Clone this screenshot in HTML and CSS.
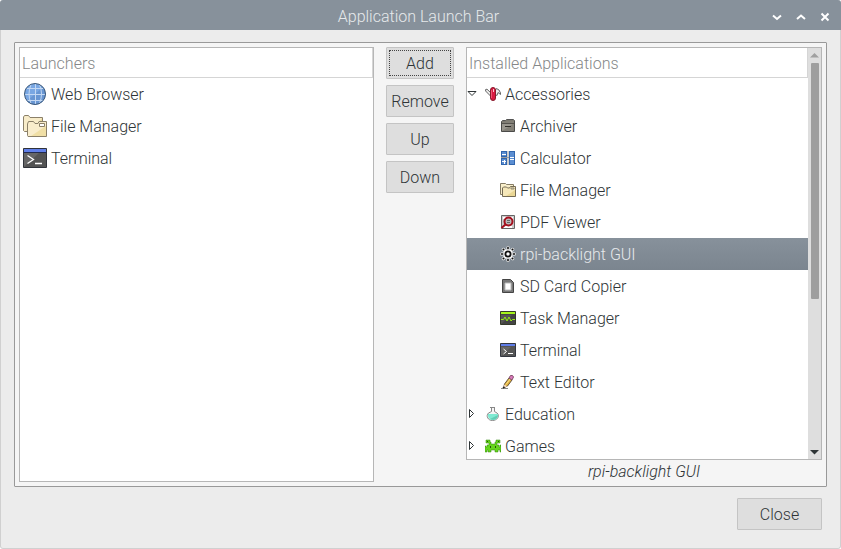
FILE: index.html
```html
<!DOCTYPE html>
<html lang="en">
<head>
<meta charset="utf-8">
<title>Application Launch Bar</title>
<link rel="stylesheet" href="styles.css">
</head>
<body>
<main class="window">
  <header class="titlebar">
    <h1 class="title">Application Launch Bar</h1>
    <div class="controls">
      <button class="control" aria-label="Minimize"><svg viewBox="0 0 12 12"><path d="M2 4.500 6 8l4-3.500"/></svg></button>
      <button class="control" aria-label="Maximize"><svg viewBox="0 0 12 12"><path d="M2 8l4-3.500L10 8"/></svg></button>
      <button class="control" aria-label="Close window"><svg viewBox="0 0 12 12"><path d="M2.500 2.500l7 7M9.500 2.500l-7 7"/></svg></button>
    </div>
  </header>
  <div class="content">
    <section class="frame">
      <div class="list">
        <div class="pane">
          <h2 class="heading">Launchers</h2>
          <ul class="rows launchers">
            <li class="row"><svg class="big" viewBox="0 0 24 24"><circle cx="12" cy="12" r="10.500" fill="#79a7e3"/><path d="M4 19 20 5a10.500 10.500 0 0 1-16 14z" fill="#6896d3"/><path d="M2 6.500h20M1.500 12.500h21M3 18.500h18M12.500 2v20M8 2.500q-4 9.500 0 19M16.500 2.500q4 9.500 0 19" fill="none" stroke="#c3d8f3"/><circle cx="12" cy="12" r="10.500" fill="none" stroke="#3c5878"/></svg>Web Browser</li>
            <li class="row"><svg class="big" viewBox="0 0 24 24"><path d="M1.500 17.500l-1-1V3l1-1.500h4L7 3.500h12.500v14z" fill="#f8ecc9" stroke="#8b8069"/><path d="M19 4v13H9z" fill="#eddc9f"/><path d="M5 22.500l-.5-1V10l1-2.500h5l1.500 2h3l1-2h7.500v15z" fill="#f9edcc" stroke="#8b8069"/><path d="M23 12v10H8z" fill="#f0dfa6"/><path d="M16.500 9.500h5v3h-5z" fill="#fff" stroke="#8b8069"/></svg>File Manager</li>
            <li class="row"><svg class="big" viewBox="0 0 24 24"><path d="M.5 2.500h23v19H.5z" fill="#535353" stroke="#30333a"/><path d="M1 21V6h16z" fill="#666"/><path d="M1 3h22v3H1z" fill="#607fe8"/><path d="M0 6.500h24" stroke="#222b4f"/><path d="M4.500 9.500l6 4-6 4M12 17.500h7" fill="none" stroke="#fff" stroke-width="1.300"/></svg>Terminal</li>
          </ul>
        </div>
      </div>
      <div class="actions">
        <button class="button focused">Add</button>
        <button class="button">Remove</button>
        <button class="button">Up</button>
        <button class="button">Down</button>
      </div>
      <div class="installed">
        <div class="list">
          <div class="pane">
            <h2 class="heading">Installed Applications</h2>
            <ul class="rows tree">
              <li class="row group"><svg class="arrow" viewBox="0 0 10 10"><path d="M1 2.500h8L5 6.500z"/></svg><svg class="icon" viewBox="0 0 16 16"><path d="M5.500 10 .6 5V3.500l1.400-.3L6 7M10 5l1.500-2.500L14 4l1.500 3v1.500L13 6.500l-1 3-2-1" fill="#eee" stroke="#666"/><rect x="5.500" y="1.500" width="5" height="13" rx="2.500" fill="#d91941" stroke="#861a2b"/><path d="M6 4v8h1V4z" fill="#ef5572"/><path d="M8 3h1v3H8z" fill="#f9c4cd"/></svg>Accessories</li>
              <li class="row item"><svg class="icon" viewBox="0 0 16 16"><path d="M1.500 13.500v-10l1-.9h3l1-1h7l1 1v10.900z" fill="#827f76" stroke="#4b4b49"/><path d="M2 5.500h12" stroke="#55534e"/><path d="M2 13V6h11z" fill="#99968e"/><path d="M5 8.500h6" stroke="#302e29"/></svg>Archiver</li>
              <li class="row item"><svg class="icon" viewBox="0 0 16 16"><path d="M1 1h6v6H1zM1 8h6v7H1zM9 1h6v14H9z" fill="#3266ad"/><path d="M2 2h4v4H2zM2 9h4v5H2zM10 2h4v12h-4z" fill="#5b8ed2"/><path d="M1 7.500h8M8 1v14" stroke="#9a9c9e"/><path d="M2 4.500h4M2 11.500h4M4.500 10v4M10 7.500h4M10 9.500h4" stroke="#fff"/></svg>Calculator</li>
              <li class="row item"><svg class="icon" viewBox="0 0 16 16"><path d="M.5 12.500v-11h5l1 1h7v10z" fill="#f9efcb" stroke="#857c65"/><path d="M2.500 14.500V6l1-1h3l1 1h2l1-1.500h5v10z" fill="#f6e8b9" stroke="#746b55"/><path d="M15 8v6H6z" fill="#ead795"/><path d="M11 6h3v1h-3z" fill="#fff" stroke="#91886d"/></svg>File Manager</li>
              <li class="row item"><svg class="icon" viewBox="0 0 16 16"><path d="M1.500 1.500h13v13h-13z" fill="#ccc" stroke="#666"/><path d="M3 3h10v2H3zM3 12h9v2H3z" fill="#fff"/><circle cx="8.500" cy="7.500" r="4" fill="#bbb" stroke="#a4101e" stroke-width="2"/><path d="m5.500 10.500-4 3.500" stroke="#a4101e" stroke-width="2"/><path d="M7 6.500h3M7 8.500h3" stroke="#666"/></svg>PDF Viewer</li>
              <li class="row item selected"><svg class="icon" viewBox="0 0 16 16"><g stroke-linecap="round" stroke="#fff"><circle cx="8" cy="8" r="3.500" fill="#fff" stroke-width="2"/><path d="M8 1.500v13M1.500 8h13M3.300 3.300l9.400 9.400M3.300 12.700l9.400-9.400" stroke-width="3"/></g><path d="M8 .8v2.500M8 12.700v2.500M.8 8h2.500M12.700 8h2.500M2.700 2.700l1.600 1.600M11.700 11.700l1.600 1.600M2.700 13.300l1.600-1.600M11.700 4.300l1.600-1.600" stroke="#111" stroke-width="1.600"/><circle cx="8" cy="8" r="2.600" fill="#fff" stroke="#111" stroke-width="1.800"/></svg>rpi-backlight GUI</li>
              <li class="row item"><svg class="icon" viewBox="0 0 16 16"><path d="M2.500 1.500h8l3 3v10h-11z" fill="#777" stroke="#444"/><path d="M5 5h6v7H5z" fill="#fff" stroke="#bbb"/></svg>SD Card Copier</li>
              <li class="row item"><svg class="icon" viewBox="0 0 16 16"><path d="M.5 1.500h15v13H.5z" fill="#444" stroke="#353a2b"/><path d="M1 14V5h11z" fill="#555"/><path d="M1 2h14v2H1z" fill="#a5f51b"/><path d="M1 9.500h2.500L5 7l2 4 2-4 2 4 1.500-1.500H15" fill="none" stroke="#96ed15"/></svg>Task Manager</li>
              <li class="row item"><svg class="icon" viewBox="0 0 16 16"><path d="M.5 1.500h15v13H.5z" fill="#555" stroke="#333740"/><path d="M1 14V5h10z" fill="#666"/><path d="M1 2h14v2H1z" fill="#5f7de8"/><path d="M3.500 7l3 2.500-3 2.500M8 11.500h5" fill="none" stroke="#fff"/></svg>Terminal</li>
              <li class="row item"><svg class="icon" viewBox="0 0 16 16"><path d="M1 14.500h7" stroke="#888"/><path d="m4.500 10 4.500-6 3 2-4.500 6-4 2z" fill="#e2b23c" stroke="#66553d"/><path d="m6 10.500 4.500-6" stroke="#fae28e"/><path d="m9 4 1.500-2.500h2l1 1.500-1.500 3z" fill="#db79bd" stroke="#85506d"/><path d="m4.500 10.500 2.500 2-4 1.500z" fill="#f5dbc1"/><path d="m3 14 1.500-1.200" stroke="#222" stroke-width="1.600"/></svg>Text Editor</li>
              <li class="row group"><svg class="arrow" viewBox="0 0 10 10"><path d="M2.500 .5v8l4-4z"/></svg><svg class="icon" viewBox="0 0 16 16"><path d="M5 1.500h5M6.500 2v3.500L3.500 7C.5 10 3 14.500 7.500 14.500s8-4.500 4.500-7.500L9.500 5.500V2" fill="#f5f5f5" stroke="#888"/><path d="M3 8h10c1 8-11 8-10 0z" fill="#80ebd3"/><path d="M5 13 13 9c0 4-5 6-8 4z" fill="#63cdb5"/></svg>Education</li>
              <li class="row group"><svg class="arrow" viewBox="0 0 10 10"><path d="M2.500 .5v8l4-4z"/></svg><svg class="icon" viewBox="0 0 16 16"><path d="M1 2h4v2h1v2h4V4h1V2h4v3h-3v2h2v2h1V7h1v7h-1v-2h-2v2h-3v-2H6v2H3v-2H2v2H0V8h1v1h1V7h2V5H1z" fill="#65d51d" stroke="#30850f" stroke-width=".5"/><path d="M2 3h1v1H2zM13 3h1v1h-1zM5 8h1v2H5zM10 8h1v2h-1z" fill="#27500c"/></svg>Games</li>
            </ul>
          </div>
          <div class="scrollbar" aria-hidden="true">
            <svg class="step off" viewBox="0 0 13 14"><path d="M2 9.500 6.500 5 11 9.500z"/></svg>
            <div class="track"><div class="thumb"></div></div>
            <svg class="step" viewBox="0 0 13 14"><path d="M2 5h9L6.500 9.500z"/></svg>
          </div>
        </div>
        <p class="caption">rpi-backlight GUI</p>
      </div>
    </section>
    <footer class="footer"><button class="button close">Close</button></footer>
  </div>
</main>
</body>
</html>
```
FILE: styles.css
```css
* { box-sizing: border-box; }
body { margin: 0; background: #fff; color: #2e3436; font: 300 16px/20px Roboto, sans-serif; }
h1, h2, p, ul { margin: 0; padding: 0; font-size: 16px; font-weight: 300; }
ul { list-style: none; }
button { font: inherit; color: inherit; }
svg { display: block; flex: none; }
.window { display: flex; flex-direction: column; min-height: 100vh; border-radius: 3px; overflow: hidden; background: #ececec; }
.titlebar { display: grid; grid-template-columns: 78px 1fr 78px; align-items: center; height: 30px; padding-right: 4px; background: #87919b; color: #e6e9eb; }
.title { grid-column: 2; text-align: center; line-height: 30px; padding-top: 2px; }
.controls { display: flex; justify-content: flex-end; }
.control { display: flex; align-items: center; justify-content: center; width: 24px; height: 30px; padding: 2px 0 0; border: 0; background: none; }
.control svg { width: 12px; height: 12px; fill: none; stroke: #fff; stroke-width: 2; }
.content { flex: 1; display: flex; flex-direction: column; padding: 12px 13px; border: solid #d0d0d0; border-width: 0 1px 1px; border-radius: 0 0 3px 3px; }
.frame { display: grid; grid-template-columns: 355fr 68px 356fr; gap: 12px; padding: 4px; border: 1px solid #999; border-radius: 1px; background: #f5f5f5; }
.list { display: flex; border: 1px solid #b6b6b6; background: #fff; min-width: 0; }
.pane { flex: 1; min-width: 0; }
.heading { height: 30px; padding: 0 2px; line-height: 32px; color: #858788; border: solid #d5d5d5; border-width: 0 1px 1px 0; }
.row { display: flex; align-items: flex-start; height: 32px; line-height: 34px; white-space: nowrap; }
.row svg { align-self: center; }
.launchers .row { gap: 4px; padding-left: 3px; }
.big { width: 24px; height: 24px; }
.icon { width: 16px; height: 16px; margin-right: 4px; }
.tree { height: 381px; overflow: hidden; }
.item { padding-left: 33px; }
.arrow { width: 10px; height: 10px; margin-right: 8px; fill: #fff; stroke: #2e3436; }
.selected { background: linear-gradient(#87919b, #7b858f); color: #e6e9eb; }
.actions { display: flex; flex-direction: column; gap: 6px; }
.button { height: 32px; padding: 2px 0 0; border: 1px solid #c4c4c4; border-radius: 1px; background: #dedede; }
.focused { outline: 1px dotted #444; outline-offset: -4px; }
.scrollbar { display: flex; flex-direction: column; width: 13px; background: #dedede; }
.step { width: 13px; height: 14px; fill: #2e3436; }
.off { fill: #a0a0a0; }
.track { flex: 1; padding: 1px 2px 1px 3px; }
.thumb { height: 62%; background: #9e9e9e; border-radius: 1px; }
.caption { height: 22px; padding-top: 2px; text-align: center; font-style: italic; }
.footer { display: flex; justify-content: flex-end; padding: 11px 5px 6px 0; }
.close { width: 85px; }
```
